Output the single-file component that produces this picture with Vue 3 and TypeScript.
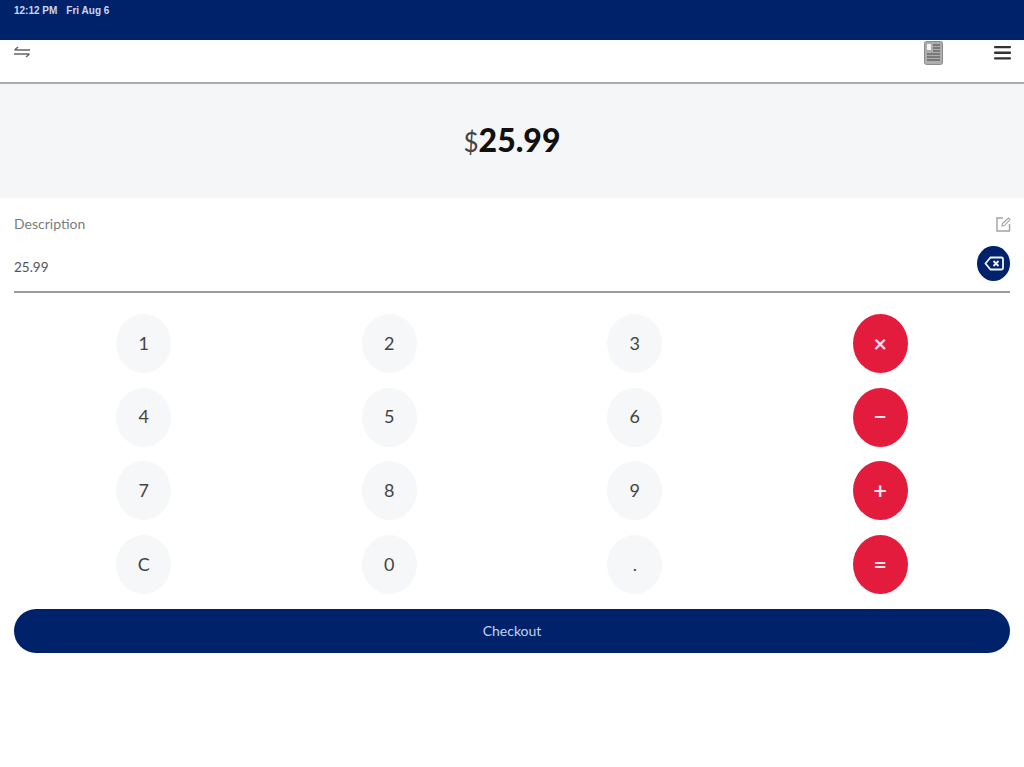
<script setup lang="ts">
interface Key {
  label: string;
  op?: boolean;
}

const keys: Key[] = [
  { label: "1" },
  { label: "2" },
  { label: "3" },
  { label: "×", op: true },
  { label: "4" },
  { label: "5" },
  { label: "6" },
  { label: "−", op: true },
  { label: "7" },
  { label: "8" },
  { label: "9" },
  { label: "+", op: true },
  { label: "C" },
  { label: "0" },
  { label: "." },
  { label: "=", op: true },
];
</script>

<template>
  <div class="screen">
    <header class="status">
      <span>12:12 PM</span>
      <span>Fri Aug 6</span>
    </header>

    <nav class="toolbar">
      <svg class="swap" width="18" height="14" viewBox="0 0 18 14" fill="none" stroke="#666" stroke-width="1.5">
        <path d="M17 5H2M5 2 1.500 5" />
        <path d="M1 9h15M13 12l3.500-3" />
      </svg>
      <div class="toolbar-right">
        <svg width="19" height="24" viewBox="0 0 19 24">
          <rect x="0.5" y="0.5" width="18" height="23" rx="2" fill="#adadad" stroke="#8c8c8c" />
          <rect x="3" y="3" width="4" height="6" fill="#f4f4f4" />
          <path d="M9 4h7M9 7h7M9 10h7M3 13h13M3 16h13M3 19h13" stroke="#6a6a6a" stroke-width="1.300" />
        </svg>
        <svg width="17" height="14" viewBox="0 0 17 14" fill="#333">
          <rect width="17" height="2.300" y="0" rx="1" />
          <rect width="17" height="2.300" y="5.600" rx="1" />
          <rect width="17" height="2.300" y="11.200" rx="1" />
        </svg>
      </div>
    </nav>

    <section class="amount">
      <span class="currency">$</span><span class="value">25.99</span>
    </section>

    <section class="entry">
      <div class="entry-row">
        <span class="description">Description</span>
        <svg class="edit" width="15" height="16" viewBox="0 0 15 16" fill="none" stroke="#a2a2a2" stroke-width="1.400">
          <path d="M7 2H1v13h12.500V8" />
          <path d="M6 10l2.500-.5L14 3.500 12.500 2 6.500 7.500Z" stroke-width="1.100" />
        </svg>
      </div>
      <div class="entry-row input-row">
        <span class="typed">25.99</span>
        <button class="backspace" type="button" aria-label="Delete">
          <svg width="20" height="15" viewBox="0 0 20 15" fill="none" stroke="#eef2fa" stroke-width="1.800">
            <path d="M6.500 1.500h11a1.500 1.500 0 0 1 1.500 1.500v9a1.500 1.500 0 0 1-1.500 1.500h-11L1.500 7.500Z" />
            <path d="M9.500 5l5 5M14.500 5l-5 5" />
          </svg>
        </button>
      </div>
    </section>

    <section class="keypad">
      <div v-for="key in keys" :key="key.label" class="cell">
        <button class="key" :class="{ op: key.op }" type="button">{{ key.label }}</button>
      </div>
    </section>

    <div class="checkout-wrap">
      <button class="checkout" type="button">Checkout</button>
    </div>
  </div>
</template>

<style scoped>
.screen {
  width: 1024px;
  height: 767px;
  overflow: hidden;
  background: #fff;
  font-family: "Lato", "Liberation Sans", sans-serif;
  color: #333;
}

.status {
  height: 40px;
  box-sizing: border-box;
  padding: 5px 14px 0 14px;
  display: flex;
  gap: 9px;
  background: #00226b;
  color: #cfd8ec;
  font-family: "Liberation Sans", sans-serif;
  font-size: 10px;
  font-weight: 700;
  line-height: 12px;
}

.toolbar {
  height: 42px;
  box-sizing: border-box;
  padding: 0 13px;
  display: flex;
  justify-content: space-between;
  align-items: flex-start;
}

.swap {
  margin-top: 5px;
}

.toolbar-right {
  display: flex;
  align-items: flex-start;
  gap: 51px;
  margin-top: 1px;
}

.toolbar-right svg:last-child {
  margin-top: 5px;
}

.amount {
  height: 116px;
  box-sizing: border-box;
  border-top: 2px solid #a9adb2;
  background: #f5f6f8;
  display: flex;
  justify-content: center;
  align-items: baseline;
  padding: 36px 0 0;
  color: #111;
}

.currency {
  font-size: 26px;
  color: #444;
  font-weight: 400;
}

.value {
  font-size: 32px;
  font-weight: 900;
  font-family: "Lato", sans-serif;
}

.entry {
  margin: 0 14px;
  height: 95px;
  box-sizing: border-box;
  border-bottom: 2px solid #9a9c9e;
  padding-top: 16px;
}

.entry-row {
  display: flex;
  justify-content: space-between;
  align-items: center;
}

.description {
  font-size: 14px;
  color: #7c7c7c;
}

.edit {
  margin-right: -1px;
  margin-top: 2px;
}

.input-row {
  margin-top: 14px;
}

.typed {
  font-size: 13.500px;
  color: #555;
  margin-top: 6px;
}

.backspace {
  width: 33px;
  height: 35px;
  border: 0;
  padding: 0;
  border-radius: 50%;
  background: #00226b;
  display: flex;
  align-items: center;
  justify-content: center;
}

.keypad {
  margin: 21px 21px 0;
  display: grid;
  grid-template-columns: repeat(4, 245.500px);
  grid-auto-rows: 73.700px;
}

.cell {
  display: flex;
  justify-content: center;
  align-items: flex-start;
}

.key {
  width: 55px;
  height: 59px;
  border: 0;
  padding: 0 0 2px;
  border-radius: 50%;
  background: #f6f7f8;
  color: #444;
  font-family: inherit;
  font-size: 18px;
}

.key.op {
  background: #e31c3d;
  color: #fbe4e8;
  font-size: 23px;
  font-weight: 700;
}

.checkout-wrap {
  margin: 0 14px;
}

.checkout {
  width: 100%;
  height: 44px;
  border: 0;
  border-radius: 22px;
  background: #00226b;
  color: #c5d2ee;
  font-family: inherit;
  font-size: 14px;
  padding-bottom: 2px;
}
</style>
